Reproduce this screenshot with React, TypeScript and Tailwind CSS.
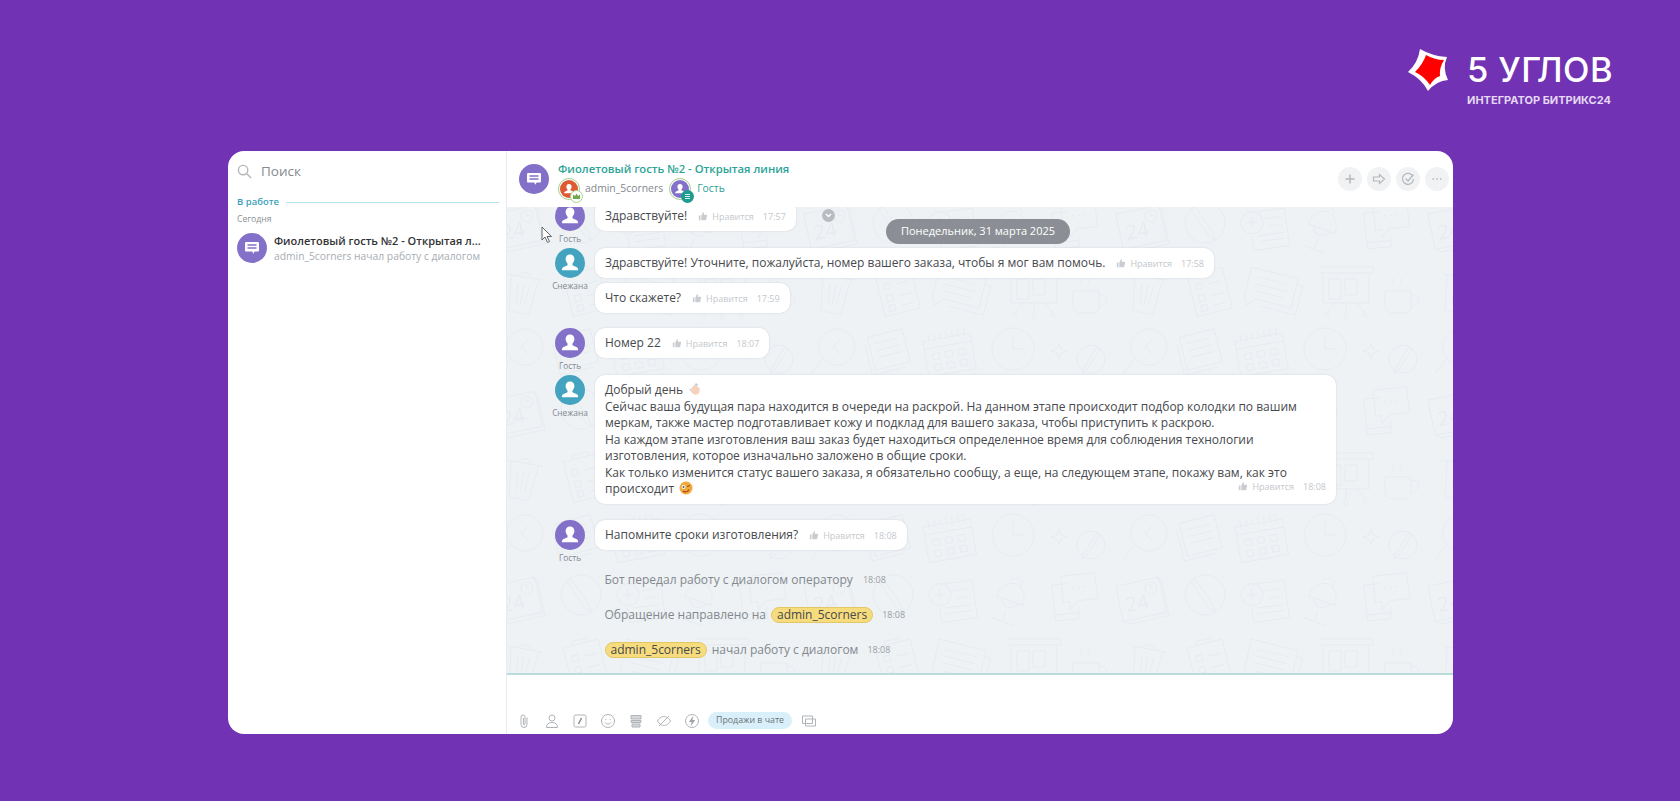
import type { ReactNode } from 'react';

const font = { fontFamily: '"Open Sans", "Noto Sans", sans-serif' };

function Person({ color }: { color: string }) {
  return (
    <svg viewBox="0 0 30 30" className="w-full h-full block">
      <circle cx="15" cy="15" r="15" fill={color} />
      <path
        d="M15 6.500c-2.700 0-4.400 2-4.400 4.600 0 1.900.9 3.400 1.900 4.400.3.800.2 1.500-.3 2-1.400.8-3.400 1.200-4.700 2.300-.4.400-.6 1.400-.6 2.400h16.200c0-1-.2-2-.6-2.400-1.300-1.100-3.300-1.500-4.700-2.300-.5-.5-.6-1.200-.3-2 1-1 1.900-2.500 1.900-4.400 0-2.600-1.700-4.600-4.400-4.600z"
        fill="#fff"
      />
    </svg>
  );
}

function ChatAvatar() {
  return (
    <svg viewBox="0 0 30 30" className="w-[30px] h-[30px] shrink-0 block">
      <circle cx="15" cy="15" r="15" fill="#8370c9" />
      <path
        d="M9.200 9h11.600c.7 0 1.200.5 1.200 1.200v7.200c0 .7-.5 1.200-1.200 1.200h-3.100l-1.500 2.200-.9-2.200H9.200c-.7 0-1.200-.5-1.200-1.200v-7.200C8 9.500 8.500 9 9.200 9z"
        fill="#fff"
      />
      <path d="M10.500 12h9M10.500 15h9" stroke="#8370c9" strokeWidth="1.400" />
    </svg>
  );
}

function Like({ time }: { time: string }) {
  return (
    <span className="inline-flex items-center text-[9px] text-[#c4c8cc] leading-none">
      <svg viewBox="0 0 12 12" className="w-[10px] h-[10px] mr-[4px]" fill="#c9cdd1">
        <path d="M1 5.500h2V11H1zM4 5.500 6 1.500c.9 0 1.300.7 1.100 1.500L6.800 4.500h3.200c.7 0 1.100.6.900 1.300l-1 4.300c-.1.500-.5.900-1.100.9H4z" />
      </svg>
      <span>Нравится</span>
      <span className="ml-[9px]">{time}</span>
    </span>
  );
}

function Bubble({ text, time }: { text: string; time: string }) {
  return (
    <div className="w-fit h-[30px] flex items-center bg-white rounded-[10px] pl-[10px] pr-[10px] shadow-[0_0_2px_rgba(82,92,105,0.2)]">
      <span className="text-[12px] text-[#46494d] whitespace-nowrap mr-[11px]">{text}</span>
      <Like time={time} />
    </div>
  );
}

function Row({ name, color, mt, children }: { name: string; color: string; mt: string; children: ReactNode }) {
  return (
    <div className={`flex items-start pl-[43px] ${mt}`}>
      <div className="w-[40px] shrink-0 flex flex-col items-center">
        <div className="w-[30px] h-[30px]">
          <Person color={color} />
        </div>
        <span className="text-[8.300px] leading-[14px] text-[#83888e] whitespace-nowrap mt-[1px]">{name}</span>
      </div>
      <div className="ml-[5px] flex flex-col gap-[5px]">{children}</div>
    </div>
  );
}

function Mention() {
  return (
    <span className="inline-block h-[16px] leading-[14px] px-[5px] rounded-full bg-[#f7dc7e] border border-[#e2c766] text-[12px] text-[#46494d]">
      admin_5corners
    </span>
  );
}

function SmallAvatar({ color, badge }: { color: string; badge: ReactNode }) {
  return (
    <div className="relative w-[22px] h-[22px] rounded-full border border-[#a9cf8f] p-[1px] shrink-0">
      <Person color={color} />
      <div className="absolute -right-[4px] -bottom-[4px] w-[13px] h-[13px] rounded-full flex items-center justify-center">{badge}</div>
    </div>
  );
}

function RoundButton({ children }: { children: ReactNode }) {
  return (
    <div className="w-[24px] h-[24px] rounded-full bg-[#f1f2f3] flex items-center justify-center">
      <svg viewBox="0 0 14 14" className="w-[14px] h-[14px]" fill="none" stroke="#b4b8bc" strokeWidth="1.200">
        {children}
      </svg>
    </div>
  );
}

function ToolIcon({ children }: { children: ReactNode }) {
  return (
    <svg viewBox="0 0 16 16" className="w-[16px] h-[16px] shrink-0" fill="none" stroke="#b0b4b8" strokeWidth="1">
      {children}
    </svg>
  );
}

function Wallpaper() {
  return (
    <svg className="absolute inset-0 w-full h-full pointer-events-none" aria-hidden="true">
      <defs>
        <pattern id="doodles" width="312" height="186" patternUnits="userSpaceOnUse" x="-20" y="-14">
          <g fill="none" stroke="#e7ebef" strokeWidth="1">
            {/* календарь 24 */}
            <g transform="translate(6 14) rotate(-12 25 20)">
              <path d="M2 2h44v36H2zM42 2l6 4v36H8l-6-4" />
              <text x="8" y="30" fontSize="20" fontFamily="Open Sans, sans-serif" stroke="none" fill="#e7ebef">24</text>
              <circle cx="36" cy="11" r="6" />
              <path d="M36 7v4h3" />
            </g>
            {/* карандаш в круге */}
            <g transform="translate(72 8)">
              <circle cx="22" cy="22" r="20" />
              <path d="m12 6 18 26 2 7-6-4L8 9z" />
            </g>
            {/* документ с плюсом */}
            <g transform="translate(128 14) rotate(-8 25 22)">
              <path d="M16 4h32v38H12V26" />
              <circle cx="14" cy="14" r="11" />
              <path d="M14 8v12M8 14h12M28 12h16M30 20h14M18 28h26M18 34h26" />
            </g>
            {/* лампа */}
            <g transform="translate(192 12) rotate(20 20 20)">
              <path d="M6 24c0-12 8-18 14-18s14 6 14 18zM14 6c0-7 12-7 12 0M12 24c0 9 16 9 16 0M20 36v8M8 46h24" />
            </g>
            {/* чат и телефон */}
            <g transform="translate(250 6) rotate(-6 25 25)">
              <path d="M4 12h16M4 12v36h24V36M4 42h24" />
              <path d="M14 4h34v26H28l-8 8v-8h-6z" />
              <path d="M24 17h2M30 17h2M36 17h2" strokeWidth="1.500" />
            </g>
            {/* корзина */}
            <g transform="translate(14 74) rotate(10 22 22)">
              <path d="M4 10h36M16 10c0-6 12-6 12 0M8 10l4 36h20l4-36M16 18l2 20M22 18v20M28 18l-2 20" />
            </g>
            {/* планшет */}
            <g transform="translate(76 72) rotate(-14 22 24)">
              <path d="M4 6h36v42H4zM14 6V2h16v4" />
              <path d="M10 16h6v6h-6zM10 28h6v6h-6zM10 38h6v6h-6zM22 19h14M22 31h14M22 41h14" />
            </g>
            {/* заметка */}
            <g transform="translate(134 76) rotate(14 28 20)">
              <path d="M2 4h48v30H14l-8 8-4-8zM50 10h6v30H20" />
              <path d="M10 12h32M10 19h32M10 26h32" />
            </g>
            {/* доска */}
            <g transform="translate(206 72)">
              <path d="M2 8h54M6 8v30h46V8M12 14h12v20H12zM28 14h12v16H28zM2 2h54v6M18 38l-8 10M40 38l8 10M29 38v12" />
              <circle cx="10" cy="50" r="2" />
              <circle cx="29" cy="52" r="2" />
              <circle cx="48" cy="50" r="2" />
            </g>
            {/* чашка */}
            <g transform="translate(272 84)">
              <path d="M2 14h26v14c0 6-4 8-8 8h-10c-4 0-8-2-8-8zM28 18c8-3 12 8 0 12" />
              <path d="M10 8c-2-3 2-4 0-8M18 8c-2-3 2-4 0-8" />
            </g>
            {/* лупа с часами */}
            <g transform="translate(10 134)">
              <circle cx="28" cy="20" r="18" />
              <path d="M32 12l-8 8 8 8M14 32 2 46" />
            </g>
            {/* газета */}
            <g transform="translate(66 138) rotate(-14 22 20)">
              <path d="M6 2h36v34H6zM2 8v32h34" />
              <path d="M12 10h24M12 17h24M12 24h24" />
            </g>
            {/* календарь-сетка */}
            <g transform="translate(124 136) rotate(-10 26 22)">
              <path d="M2 8h48v36H2zM2 16h48" />
              <path d="M8 2v8M14 2v8M20 2v8M26 2v8M32 2v8M38 2v8M44 2v8" />
              <path d="M9 22h7v6H9zM22 22h7v6h-7zM35 22h7v6h-7zM9 33h7v6H9zM22 33h7v6h-7zM35 33h7v6h-7z" />
            </g>
            {/* часы */}
            <g transform="translate(192 134)">
              <circle cx="22" cy="22" r="21" />
              <path d="M22 8v14h12" />
            </g>
            {/* штрих */}
            <g transform="translate(252 146)">
              <path d="m8 4 2 6 6 2-6 2-2 6-2-6-6-2 6-2z" />
              <circle cx="40" cy="20" r="14" />
              <path d="m32 30 14-22 3 2-14 22-4 2z" />
            </g>
          </g>
        </pattern>
      </defs>
      <rect width="100%" height="100%" fill="url(#doodles)" />
    </svg>
  );
}

function Logo() {
  return (
    <div className="flex items-start">
      <svg viewBox="0 0 50 50" className="w-[50px] h-[50px] mt-[16px] mr-[12px]">
        <path d="M15 4Q27 11 42 12Q37 23 43 35Q31 36 23 46Q17 34 3 27Q13 18 15 4z" fill="#fff" />
        <path d="M21 10Q30 15 39 15Q34 23 35 31Q29 33 25 40Q19 31 10 27Q18 19 21 10z" fill="#ff0000" />
      </svg>
      <div className="flex flex-col items-start mt-[22px]" style={{ fontFamily: 'Inter, sans-serif' }}>
        <span className="text-[34.500px] leading-[38px] font-medium text-white tracking-[0.4px] whitespace-nowrap">5 УГЛОВ</span>
        <span className="text-[11px] leading-[14px] mt-[4px] font-bold text-[#e4d8f2] whitespace-nowrap">ИНТЕГРАТОР БИТРИКС24</span>
      </div>
    </div>
  );
}

export default function App() {
  return (
    <div className="w-[1680px] h-[801px] bg-[#7132b4] overflow-hidden" style={font}>
      <div className="h-[151px] flex justify-end pr-[67px] pt-[29px]">
        <Logo />
      </div>
      <div className="ml-[228px] w-[1225px] h-[583px] bg-white rounded-[16px] overflow-hidden flex">
        {/* левая колонка */}
        <div className="w-[279px] shrink-0 border-r border-[#e9ebed] flex flex-col">
          <div className="h-[41px] flex items-center pl-[9px]">
            <svg viewBox="0 0 16 16" className="w-[15px] h-[15px]" fill="none" stroke="#b3b6b9" strokeWidth="1.500">
              <circle cx="6.500" cy="6.500" r="5" />
              <path d="m10.500 10.500 4.500 4.500" />
            </svg>
            <span className="ml-[9px] text-[13.500px] text-[#858a8f]">Поиск</span>
          </div>
          <div className="flex items-center pl-[9px] pr-[7px] mt-[2px] h-[16px]">
            <span className="text-[9.500px] font-semibold text-[#3b9fba] whitespace-nowrap">В работе</span>
            <div className="ml-[7px] flex-1 h-[1px] bg-[#b5e2ee]" />
          </div>
          <div className="pl-[9px] mt-[2px] text-[8.700px] leading-[14px] text-[#8a8f94]">Сегодня</div>
          <div className="flex items-center pl-[9px] pr-[20px] mt-[7px]">
            <ChatAvatar />
            <div className="ml-[7px] min-w-0 flex-1">
              <div className="text-[11px] leading-[16px] font-semibold text-[#333] truncate">Фиолетовый гость №2 - Открытая линия</div>
              <div className="text-[10.300px] leading-[14px] text-[#a8adb3] whitespace-nowrap">admin_5corners начал работу с диалогом</div>
            </div>
          </div>
        </div>

        {/* правая колонка */}
        <div className="flex-1 min-w-0 flex flex-col">
          <div className="h-[56px] shrink-0 flex items-center pl-[12px] pr-[4px]">
            <ChatAvatar />
            <div className="ml-[9px] flex-1 min-w-0">
              <div className="text-[11.250px] leading-[14px] font-semibold text-[#2ba396] mt-[3px]">Фиолетовый гость №2 - Открытая линия</div>
              <div className="flex items-center mt-[2px]">
                <SmallAvatar
                  color="#dd5a33"
                  badge={
                    <svg viewBox="0 0 13 13" className="w-[13px] h-[13px]">
                      <circle cx="6.500" cy="6.500" r="6" fill="#fff" stroke="#a9cf8f" />
                      <path d="M3 9V4.500l2 1.500 1.500-2.500L8 6l2-1.500V9z" fill="#6fa84f" />
                    </svg>
                  }
                />
                <span className="ml-[5px] text-[10.400px] text-[#83888e] whitespace-nowrap">admin_5corners</span>
                <div className="ml-[6px]">
                  <SmallAvatar
                    color="#8370c9"
                    badge={
                      <svg viewBox="0 0 13 13" className="w-[13px] h-[13px]">
                        <circle cx="6.500" cy="6.500" r="6.500" fill="#1f9a8f" />
                        <path d="M4 4.500h5M4 6.500h5M4 8.500h5" stroke="#d3f0ec" strokeWidth="1" />
                      </svg>
                    }
                  />
                </div>
                <span className="ml-[6px] text-[10.400px] text-[#2ba396]">Гость</span>
              </div>
            </div>
            <div className="flex gap-[5px]">
              <RoundButton>
                <path d="M7 2.500v9M2.500 7h9" strokeWidth="1.500" />
              </RoundButton>
              <RoundButton>
                <path d="M1.500 5h6V2.500L12.500 7l-5 4.500V9h-6z" />
              </RoundButton>
              <RoundButton>
                <path d="M12 4.500A5.500 5.500 0 1 0 12.500 7M4.500 6.500 7 9l5.500-6.500" />
              </RoundButton>
              <RoundButton>
                <path d="M2.500 7h1.500M6.300 7h1.500M10 7h1.500" strokeWidth="1.500" />
              </RoundButton>
            </div>
          </div>

          <div className="relative h-[468px] bg-[#eef2f5] overflow-hidden border-b-2 border-[#b8dcdc]">
            <Wallpaper />
            <div className="relative -mt-[6px]">
              <Row name="Гость" color="#8370c9" mt="mt-0">
                <Bubble text="Здравствуйте!" time="17:57" />
              </Row>
              <Row name="Снежана" color="#44a4c0" mt="mt-[2px]">
                <Bubble text="Здравствуйте! Уточните, пожалуйста, номер вашего заказа, чтобы я мог вам помочь." time="17:58" />
                <Bubble text="Что скажете?" time="17:59" />
              </Row>
              <Row name="Гость" color="#8370c9" mt="mt-[15px]">
                <Bubble text="Номер 22" time="18:07" />
              </Row>
              <Row name="Снежана" color="#44a4c0" mt="mt-[2px]">
                <div className="w-[741px] h-[129px] bg-white rounded-[10px] pl-[10px] pr-[12px] pt-[7px] relative shadow-[0_0_2px_rgba(82,92,105,0.2)]">
                  <p className="text-[12px] leading-[16.500px] text-[#46494d] whitespace-nowrap">
                    Добрый день
                    <svg viewBox="0 0 14 14" className="inline-block w-[14px] h-[14px] ml-[5px] align-[-2px]">
                      <path d="M2 8 7 2l5 5-1 4c-1 2-4 2-6 1z" fill="#f6d2bd" />
                      <path d="M8 1l2 1.500-1 1.500-2-1.500z" fill="#a9d2f0" />
                      <path d="M1.500 6l1.500 2-1 1z" fill="#a9d2f0" />
                    </svg>
                    <br />
                    Сейчас ваша будущая пара находится в очереди на раскрой. На данном этапе происходит подбор колодки по вашим
                    <br />
                    меркам, также мастер подготавливает кожу и подклад для вашего заказа, чтобы приступить к раскрою.
                    <br />
                    На каждом этапе изготовления ваш заказ будет находиться определенное время для соблюдения технологии
                    <br />
                    изготовления, которое изначально заложено в общие сроки.
                    <br />
                    Как только изменится статус вашего заказа, я обязательно сообщу, а еще, на следующем этапе, покажу вам, как это
                    <br />
                    происходит
                    <svg viewBox="0 0 14 14" className="inline-block w-[14px] h-[14px] ml-[5px] align-[-2px]">
                      <circle cx="7" cy="7" r="6.500" fill="#f2a93b" />
                      <circle cx="4.500" cy="6" r="2" fill="#fff" />
                      <circle cx="4.500" cy="6" r="1" fill="#555" />
                      <path d="M8 5.500l3-1" stroke="#7a4a10" strokeWidth="1" />
                      <path d="M4 10c2 1.500 5 1 6-1.500" stroke="#b0451f" strokeWidth="1.200" fill="none" />
                    </svg>
                  </p>
                  <div className="absolute right-[10px] bottom-[7px]">
                    <Like time="18:08" />
                  </div>
                </div>
              </Row>
              <Row name="Гость" color="#8370c9" mt="mt-[16px]">
                <Bubble text="Напомните сроки изготовления?" time="18:08" />
              </Row>
              <div className="pl-[97.500px] mt-[5px] text-[12px] leading-[20px] text-[#83888e]">
                <div className="flex items-center">
                  Бот передал работу с диалогом оператору
                  <span className="ml-[10px] text-[9px] text-[#9a9ea3]">18:08</span>
                </div>
                <div className="flex items-center mt-[15px]">
                  Обращение направлено на
                  <span className="ml-[5px]">
                    <Mention />
                  </span>
                  <span className="ml-[9px] text-[9px] text-[#9a9ea3]">18:08</span>
                </div>
                <div className="flex items-center mt-[15px]">
                  <Mention />
                  <span className="ml-[5px]">начал работу с диалогом</span>
                  <span className="ml-[9px] text-[9px] text-[#9a9ea3]">18:08</span>
                </div>
              </div>
            </div>

            {/* плашка даты и стрелка поверх ленты */}
            <div className="absolute left-[379px] top-[12px] w-[184px] h-[25px] rounded-full bg-[#8b8f95] flex items-center justify-center text-[11px] text-white whitespace-nowrap">
              Понедельник, 31 марта 2025
            </div>
            <div className="absolute left-[315px] top-[2px] w-[13px] h-[13px] rounded-full bg-[#b9bcc0] flex items-center justify-center">
              <svg viewBox="0 0 9 9" className="w-[9px] h-[9px]" fill="none" stroke="#fff" strokeWidth="1.500">
                <path d="m2 3 2.500 2.500L7 3" />
              </svg>
            </div>
            <svg viewBox="0 0 12 18" className="absolute left-[34px] top-[19px] w-[12px] h-[18px]">
              <path d="M1 1v13l3-3 2.500 5.500 2-1L6 10.500h4.500z" fill="#fff" stroke="#555" strokeWidth="0.900" />
            </svg>
          </div>

          <div className="flex-1 relative flex items-end pl-[9px] pb-[5px] gap-[13px]">
            <div className="flex items-center h-[17px] gap-[12px]">
              <ToolIcon>
                <path d="M11 4.500v7a3 3 0 0 1-6 0V4a2 2 0 0 1 4 0v7a.800.800 0 0 1-1.600 0V5" />
              </ToolIcon>
              <ToolIcon>
                <circle cx="8" cy="5" r="3" />
                <path d="M2.500 14.500c0-3.500 2-5 5.500-5s5.500 1.500 5.500 5z" />
              </ToolIcon>
              <ToolIcon>
                <rect x="2" y="2" width="12" height="12" rx="1.500" />
                <path d="m6.500 11 3-6" strokeWidth="1.400" stroke="#7f8388" />
              </ToolIcon>
              <ToolIcon>
                <circle cx="8" cy="8" r="6.500" />
                <path d="M5 9.500c1.500 2 4.500 2 6 0M5.800 6v1M10.200 6v1" />
              </ToolIcon>
              <ToolIcon>
                <path d="M3 2.500h10v3.500H3zM3 7.500h10v2H3zM4 11h8v3H4z" fill="#d5d7da" />
              </ToolIcon>
              <ToolIcon>
                <path d="M1.500 8c2-3.500 4.500-4.500 6.500-4.500S12.500 4.500 14.500 8c-2 3.500-4.500 4.500-6.500 4.500S3.500 11.500 1.500 8zM3 13 13 3" />
              </ToolIcon>
              <ToolIcon>
                <circle cx="8" cy="8" r="6.500" />
                <path d="M9.500 2.500 4.800 9H7.600l-1 4.500L11.200 7H8.400z" fill="#a0a4a9" stroke="none" />
              </ToolIcon>
            </div>
            <div className="h-[17px] px-[8px] rounded-full bg-[#d9f0fa] flex items-center text-[8.800px] text-[#6b7178] whitespace-nowrap -ml-[5px]">
              Продажи в чате
            </div>
            <div className="h-[17px] flex items-center -ml-[4px]">
              <ToolIcon>
                <path d="M1.500 3h10v7.500h-10zM4.500 6h10v7h-10z" />
              </ToolIcon>
            </div>
          </div>
        </div>
      </div>
    </div>
  );
}
